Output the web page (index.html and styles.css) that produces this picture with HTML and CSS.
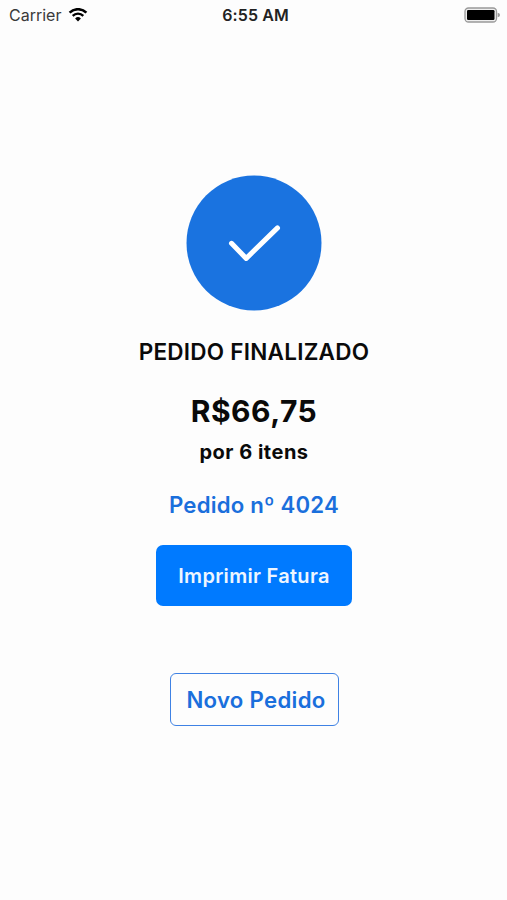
FILE: index.html
```html
<!DOCTYPE html>
<html lang="pt-BR">
<head>
    <meta charset="UTF-8">
    <meta name="viewport" content="width=device-width, initial-scale=1.0">
    <title>Pedido Finalizado</title>
    <link rel="stylesheet" href="styles.css">
</head>
<body>
    <header class="status-bar">
        <div class="status-left">
            <span class="carrier">Carrier</span>
            <svg class="wifi" width="20" height="14" viewBox="0 0 20 14">
                <path d="M1.6 4.6a12 12 0 0 1 16.8 0" fill="none" stroke="#000" stroke-width="2.5"/>
                <path d="M4.7 7.9a7.5 7.5 0 0 1 10.6 0" fill="none" stroke="#000" stroke-width="2.3"/>
                <path d="M10 13.4L7.1 10.5a4.1 4.1 0 0 1 5.8 0z" fill="#000"/>
            </svg>
        </div>
        <span class="time">6:55 AM</span>
        <div class="status-right">
            <svg class="battery" width="37" height="16" viewBox="0 0 37 16">
                <rect x="1" y="1" width="31.5" height="14" rx="3.5" fill="#eee" stroke="#999" stroke-width="1.3"/>
                <rect x="3" y="3" width="27.5" height="10" rx="1.2" fill="#000"/>
                <path d="M33.7 5.7q2.3 .6 2.3 2.3t-2.3 2.3z" fill="#999"/>
            </svg>
        </div>
    </header>

    <main class="content">
        <svg class="check" width="136" height="136" viewBox="0 0 136 136">
            <circle cx="68" cy="68" r="67.5" fill="#1a73e0"/>
            <path d="M45.5 68.3L60.2 83.4L91.5 52.9" fill="none" stroke="#fff" stroke-width="5" stroke-linecap="round" stroke-linejoin="round"/>
        </svg>
        <h1 class="title">PEDIDO FINALIZADO</h1>
        <p class="price">R$66,75</p>
        <p class="items">por 6 itens</p>
        <p class="order-number">Pedido nº 4024</p>
        <button class="btn btn-print">Imprimir Fatura</button>
        <button class="btn btn-new">Novo Pedido</button>
    </main>
</body>
</html>
```
FILE: styles.css
```css
* {
    box-sizing: border-box;
}
body {
    margin: 0;
    height: 100vh;
    background-color: #fdfdfd;
    color: #0a0a0a;
    font-family: Inter, "Liberation Sans", sans-serif;
}
.status-bar {
    display: grid;
    grid-template-columns: 1fr auto 1fr;
    align-items: center;
    height: 30px;
    padding: 0 6px 0 9px;
}
.status-left {
    display: flex;
    align-items: center;
    gap: 7px;
}
.carrier {
    font-size: 16px;
    color: #3a3a3a;
}
.time {
    padding-left: 1px;
    font-size: 16px;
    font-weight: 600;
    letter-spacing: 0.1px;
    color: #222;
}
.status-right {
    display: flex;
    justify-content: flex-end;
}
.content {
    display: flex;
    flex-direction: column;
    align-items: center;
    padding: 145px 0 0 1px;
}
.check {
    display: block;
}
.title {
    margin: 26px 0 0;
    font-size: 22.5px;
    font-weight: 600;
    line-height: 30px;
    letter-spacing: 0.25px;
}
.price {
    margin: 24px 0 0;
    font-size: 30px;
    font-weight: 700;
    line-height: 40px;
    letter-spacing: 0.5px;
}
.items {
    margin: 8px 0 0;
    font-size: 20px;
    font-weight: 700;
    line-height: 26px;
    letter-spacing: 0.5px;
}
.order-number {
    margin: 25px 0 0;
    font-size: 22.2px;
    font-weight: 600;
    line-height: 30px;
    letter-spacing: 0.2px;
    color: #1a6fdc;
}
.btn {
    padding: 0;
    font-family: inherit;
    font-weight: 600;
    letter-spacing: 0.3px;
    cursor: pointer;
}
.btn-print {
    width: 196px;
    height: 61px;
    margin-top: 25px;
    padding-top: 1px;
    border: none;
    border-radius: 7px;
    background-color: #007aff;
    color: #eef6ff;
    font-size: 20px;
}
.btn-new {
    width: 169px;
    height: 53px;
    margin-top: 67px;
    padding-left: 4px;
    border: 1.5px solid #3f82e4;
    border-radius: 6px;
    background-color: transparent;
    color: #1a6fdc;
    font-size: 22.2px;
}
```
